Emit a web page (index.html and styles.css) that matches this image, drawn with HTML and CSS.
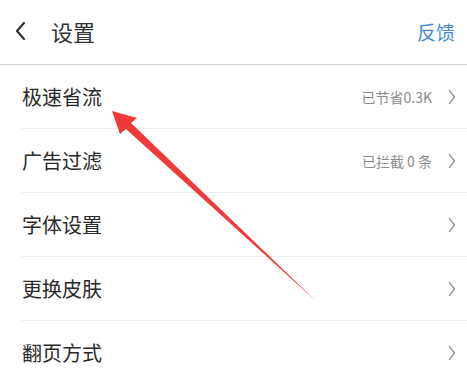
FILE: index.html
```html
<!DOCTYPE html>
<html lang="zh">
<head>
<meta charset="utf-8">
<link rel="stylesheet" href="styles.css">
</head>
<body>
<div class="page">
  <header class="header">
    <div class="header-left">
      <svg class="back" width="12" height="20" viewBox="0 0 12 20"><path d="M10 2 L3 10 L10 18" fill="none" stroke="#333" stroke-width="2.2" stroke-linecap="round" stroke-linejoin="round"/></svg>
      <span class="title">设置</span>
    </div>
    <span class="feedback">反馈</span>
  </header>
  <ul class="list">
    <li class="row"><span class="label">极速省流</span><span class="right"><span class="value">已节省0.3K</span><svg class="chev" width="8" height="16" viewBox="0 0 8 16"><path d="M1.5 1.5 L6.5 8 L1.5 14.5" fill="none" stroke="#9a9a9a" stroke-width="1.4" stroke-linecap="round" stroke-linejoin="round"/></svg></span></li>
    <li class="row"><span class="label">广告过滤</span><span class="right"><span class="value">已拦截 0 条</span><svg class="chev" width="8" height="16" viewBox="0 0 8 16"><path d="M1.5 1.5 L6.5 8 L1.5 14.5" fill="none" stroke="#9a9a9a" stroke-width="1.4" stroke-linecap="round" stroke-linejoin="round"/></svg></span></li>
    <li class="row"><span class="label">字体设置</span><span class="right"><svg class="chev" width="8" height="16" viewBox="0 0 8 16"><path d="M1.5 1.5 L6.5 8 L1.5 14.5" fill="none" stroke="#9a9a9a" stroke-width="1.4" stroke-linecap="round" stroke-linejoin="round"/></svg></span></li>
    <li class="row"><span class="label">更换皮肤</span><span class="right"><svg class="chev" width="8" height="16" viewBox="0 0 8 16"><path d="M1.5 1.5 L6.5 8 L1.5 14.5" fill="none" stroke="#9a9a9a" stroke-width="1.4" stroke-linecap="round" stroke-linejoin="round"/></svg></span></li>
    <li class="row last"><span class="label">翻页方式</span><span class="right"><svg class="chev" width="8" height="16" viewBox="0 0 8 16"><path d="M1.5 1.5 L6.5 8 L1.5 14.5" fill="none" stroke="#9a9a9a" stroke-width="1.4" stroke-linecap="round" stroke-linejoin="round"/></svg></span></li>
  </ul>
  <svg class="arrow" width="467" height="377" viewBox="0 0 467 377">
    <polygon points="112,111 137,118 131,123 317,302 126,129 120,134" fill="#f03a3a"/>
  </svg>
</div>
</body>
</html>
```

FILE: styles.css
```css
* { box-sizing: border-box; }
html, body { margin: 0; padding: 0; background: #fff; }
body {
  font-family: "Noto Sans CJK SC", "Noto Sans", sans-serif;
  width: 467px;
  height: 377px;
  overflow: hidden;
}
.page { position: relative; width: 467px; height: 377px; }
.header {
  height: 65px;
  display: flex;
  align-items: center;
  justify-content: space-between;
  padding: 0 12px 2px 14px;
  border-bottom: 1px solid #d6d6d6;
}
.header-left { display: flex; align-items: center; }
.back { display: block; margin-right: 25px; }
.title { font-size: 22px; color: #333; line-height: 1; }
.feedback { font-size: 19px; color: #3f8bd9; line-height: 1; }
.list { list-style: none; margin: 0; padding: 0 0 0 22px; }
.row {
  height: 64px;
  display: flex;
  align-items: center;
  justify-content: space-between;
  border-bottom: 1px solid #ececec;
  padding-right: 11px;
}
.row.last { border-bottom: none; }
.label { font-size: 20px; color: #2a2a2a; line-height: 1; }
.right { display: flex; align-items: center; }
.value { font-size: 14px; color: #8c8c8c; margin-right: 16px; line-height: 1; }
.chev { display: block; }
.arrow { position: absolute; left: 0; top: 0; pointer-events: none; }
```
